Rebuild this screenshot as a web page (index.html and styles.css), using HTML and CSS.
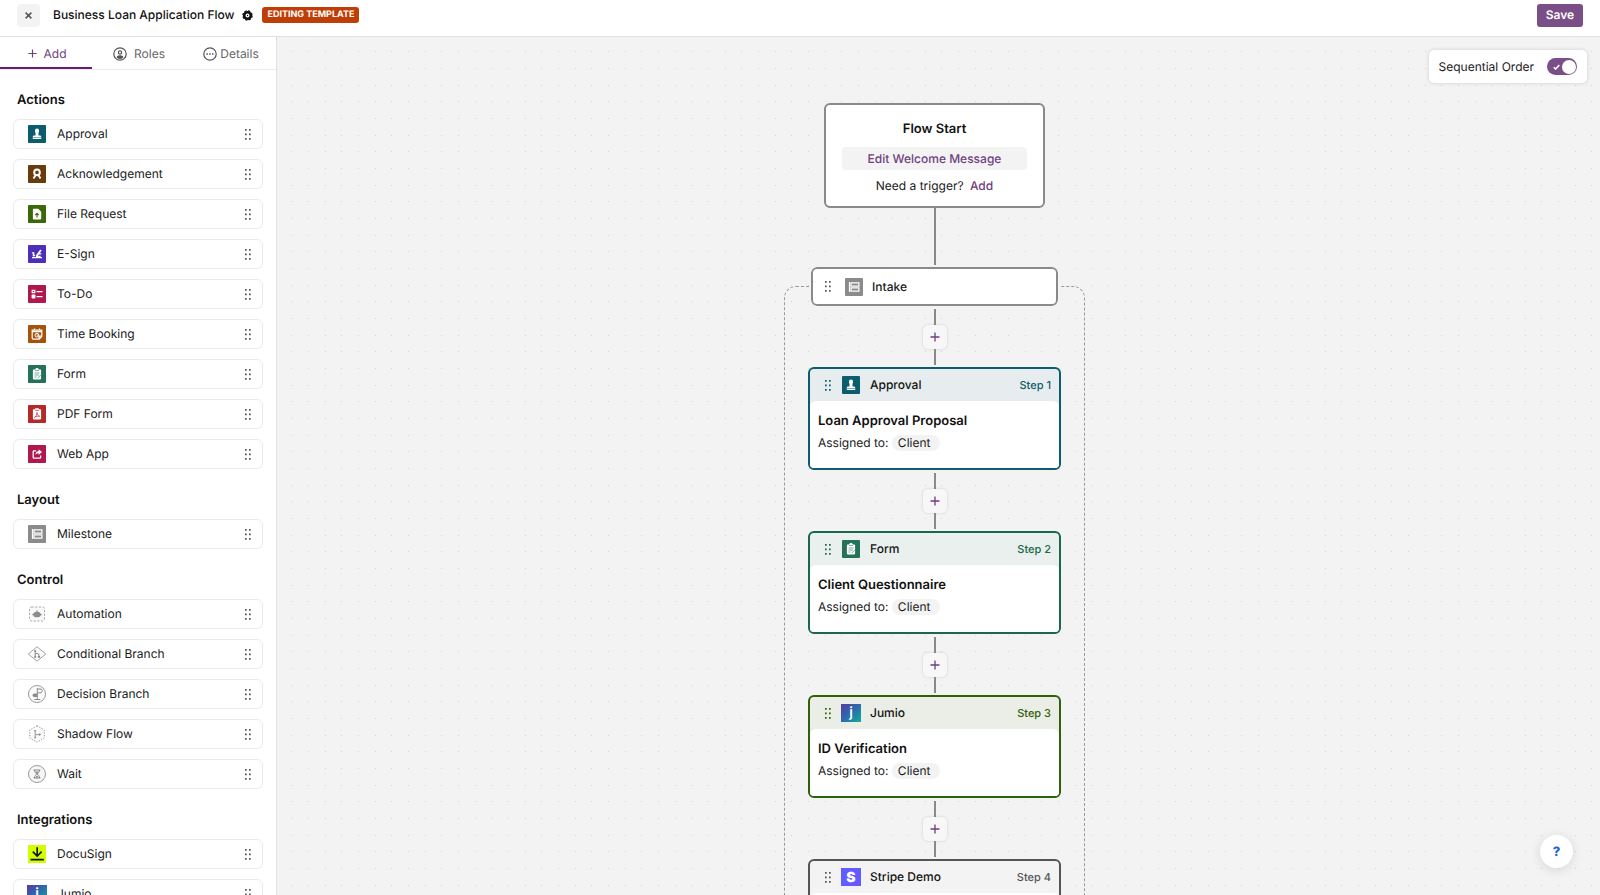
FILE: index.html
```html
<!DOCTYPE html>
<html lang="en">
<head>
  <meta charset="UTF-8" />
  <meta name="viewport" content="width=device-width, initial-scale=1.0"/>
  <title>Business Loan Application Flow</title>
  <link rel="stylesheet" href="styles.css">
</head>
<body>
  <!-- Icon sprite -->
  <svg class="sprite" aria-hidden="true">
    <defs>
      <linearGradient id="jumioGradient" x1="0" y1="0" x2="1" y2="1">
        <stop offset="0" stop-color="#5a3a9c"/>
        <stop offset="0.45" stop-color="#2f66b0"/>
        <stop offset="1" stop-color="#0fae96"/>
      </linearGradient>
    </defs>
    <symbol id="drag" viewBox="0 0 6 11">
      <path fill="currentColor" d="M0 0h1.700v1.700H0zM4 0h1.700v1.700H4zM0 4.500h1.700v1.700H0zM4 4.500h1.700v1.700H4zM0 9h1.700v1.700H0zM4 9h1.700v1.700H4z"/>
    </symbol>
    <symbol id="plus" viewBox="0 0 10 10">
      <path fill="none" stroke="currentColor" stroke-width="1.3" d="M5 .5v9M.5 5h9"/>
    </symbol>
    <symbol id="approval" viewBox="0 0 18 18">
      <rect width="18" height="18" rx="1" fill="#0b5c6c"/>
      <path fill="#fff" d="M9 3.600a2.100 2.100 0 0 1 2.100 2.100c0 .9-.6 1.500-.6 2.600v2.200H12a1.200 1.200 0 0 1 1.200 1.200v2.300H4.800v-2.300A1.200 1.200 0 0 1 6 10.500h1.500V8.300c0-1.100-.6-1.700-.6-2.600A2.100 2.100 0 0 1 9 3.600z"/>
      <path stroke="#0b5c6c" stroke-width=".5" d="M4.800 12.500h8.400"/>
    </symbol>
    <symbol id="acknowledgement" viewBox="0 0 18 18">
      <rect width="18" height="18" rx="1" fill="#693a0c"/>
      <circle cx="9" cy="7.400" r="2.800" fill="none" stroke="#fff" stroke-width="2"/>
      <path fill="none" stroke="#fff" stroke-width="1.900" d="M7.300 10.500 5.500 13.600M10.700 10.500l1.800 3.100"/>
    </symbol>
    <symbol id="file" viewBox="0 0 18 18">
      <rect width="18" height="18" rx="1" fill="#3b6809"/>
      <path fill="#fff" d="M5.800 3.700h4.400l3 3v6.800a.9.9 0 0 1-.9.9H5.800a.9.9 0 0 1-.9-.9V4.600a.9.9 0 0 1 .9-.9z"/>
      <path fill="none" stroke="#3b6809" stroke-width="1.100" d="M9 12.400V8.600M7.200 10.200 9 8.400l1.800 1.800"/>
    </symbol>
    <symbol id="esign" viewBox="0 0 18 18">
      <rect width="18" height="18" rx="1" fill="#4d2fba"/>
      <path fill="none" stroke="#fff" stroke-width="1.300" d="M4 8.200c1.500-1 2.300-.6 1.500 1.200-.8 2 .5 1.500 1.500.6M4 12.700h10"/>
      <path fill="#fff" d="m7.800 11.900.5-2.200 4-5.200 1.400 1.100-2 2.600h1.900l-.6 1.200h-2.200l-.9 1.300h2.700v1.200z"/>
    </symbol>
    <symbol id="todo" viewBox="0 0 18 18">
      <rect width="18" height="18" rx="1" fill="#b0174c"/>
      <path fill="none" stroke="#fff" stroke-width="1.200" d="M4.200 5.300h2.600v2.400H4.200zM8.500 6.600h6M8.500 11.600h6"/>
      <rect x="3.600" y="9.600" width="3.800" height="3.800" rx=".6" fill="#fff"/>
    </symbol>
    <symbol id="booking" viewBox="0 0 18 18">
      <rect width="18" height="18" rx="1" fill="#a5530a"/>
      <path fill="none" stroke="#fff" stroke-width="1.200" d="M4.200 5.200h9.600v6.200l-2.600 2.700h-6a1 1 0 0 1-1-1zM4.200 6.600h9.600M6.500 3.600v2M11.500 3.600v2M13.700 11.200h-2.600v2.700"/>
      <circle cx="8.900" cy="10.200" r="1.900" fill="none" stroke="#fff" stroke-width="1"/>
      <path fill="none" stroke="#fff" stroke-width=".8" d="M8.900 9.200v1.100h1"/>
    </symbol>
    <symbol id="form" viewBox="0 0 18 18">
      <rect width="18" height="18" rx="1" fill="#237259"/>
      <path fill="#fff" d="M5.700 4.500h1.500A1.800 1.800 0 0 1 9 3.100a1.800 1.800 0 0 1 1.800 1.400h1.500a.8.8 0 0 1 .8.8v8.300a.8.8 0 0 1-.8.8H5.700a.8.8 0 0 1-.8-.8V5.300a.8.8 0 0 1 .8-.8z"/>
      <path fill="none" stroke="#237259" stroke-width=".6" d="M7 5.600h4M6.500 8h5M6.500 10h4.500M6.500 12h2M9.500 13.300l3.600-3.600"/>
    </symbol>
    <symbol id="pdf" viewBox="0 0 18 18">
      <rect width="18" height="18" rx="1" fill="#b32a26"/>
      <path fill="#fff" d="M5.700 4.200h1.500V3.300h3.600v.9h1.500a.8.8 0 0 1 .8.8v8.600a.8.8 0 0 1-.8.8H5.700a.8.8 0 0 1-.8-.8V5a.8.8 0 0 1 .8-.8z"/>
      <path fill="none" stroke="#b32a26" stroke-width=".7" d="M7.200 5.400h3.600M8.900 7.400c.5 2.200 1.300 3.600 2.800 3.900-1.800-.4-3.700 0-5.300 1.200 1.700-1.100 2.700-3 2.500-5.100z"/>
    </symbol>
    <symbol id="webapp" viewBox="0 0 18 18">
      <rect width="18" height="18" rx="1" fill="#b0174c"/>
      <path fill="none" stroke="#fff" stroke-width="1.300" d="M8.200 5.800H6a.8.8 0 0 0-.8.8v5.800a.8.8 0 0 0 .8.8h5.800a.8.8 0 0 0 .8-.8v-1.800"/>
      <path fill="#fff" d="m10.600 4.200 3.400 2.900-3.400 2.900V8.300c-1.500 0-2.500.5-3.200 2 0-2.600 1.200-4.100 3.200-4.400z"/>
    </symbol>
    <symbol id="milestone" viewBox="0 0 18 18">
      <rect width="18" height="18" rx="1" fill="#8b8b8b"/>
      <path fill="none" stroke="#fff" stroke-width="1.200" d="M4.500 4v10M6 4.900h7.900v3.300H6zM6 9.900h7.900v3.300H6z"/>
    </symbol>
    <symbol id="automation" viewBox="0 0 18 18">
      <rect x="1.500" y="2" width="15" height="14" rx="2" fill="#f8f8f8" stroke="#a2a2a2" stroke-width=".9" stroke-dasharray="2.200 1.500"/>
      <path fill="#8b8b8b" d="M8.500 5.300h1v1.500c1.800.1 3 1.100 3.200 2.100l1 .2v1l-1.100.3c-.4 1.200-1.700 1.900-3.600 1.900s-3.200-.7-3.600-1.900l-1.100-.3v-1l1-.2c.2-1 1.400-2 3.200-2.100z"/>
    </symbol>
    <symbol id="conditional" viewBox="0 0 18 18">
      <path fill="#fafafa" stroke="#999" stroke-width=".9" d="M9 1.800 17.800 9 9 16.200.2 9z"/>
      <path fill="none" stroke="#888" stroke-width="1" d="M7.200 5.800v6.400M7.200 9c2.500-1.200 3.700-.4 3.700 1v1.500"/>
      <path fill="#888" d="M6.200 5.200h2v1.500h-2zM6.200 11.300h2v1.500h-2zM9.900 11h2.200v1.700H9.900z"/>
    </symbol>
    <symbol id="decision" viewBox="0 0 18 18">
      <circle cx="9" cy="9" r="8.500" fill="#fafafa" stroke="#8f8f8f" stroke-width=".9"/>
      <path fill="none" stroke="#8b8b8b" stroke-width="1" d="M9.300 3v11.300M6.300 14.500h6M9.300 4h3.800l1.300 1.900-1.300 1.900H9.300"/>
      <path fill="#8b8b8b" d="M9.300 8.500v3.400H5.600L4.300 10.200l1.300-1.700z"/>
    </symbol>
    <symbol id="shadow" viewBox="0 0 18 18">
      <path fill="#fafafa" stroke="#8f8f8f" stroke-width="1" stroke-dasharray="1.200 1.500" d="M9 .8l7.300 4.200v8L9 17.200 1.700 13V5z"/>
      <path fill="none" stroke="#999" stroke-width="1" d="M7.200 5.500v7.300M7.200 9.600h4.500"/>
      <path fill="#999" d="M6.300 5h1.800v1.600H6.300zM6.300 11.700h1.800v1.600H6.300zM10.900 7.900l2.500 1.700-2.500 1.700z"/>
    </symbol>
    <symbol id="wait" viewBox="0 0 18 18">
      <circle cx="9" cy="9" r="8.500" fill="#f6f6f6" stroke="#8f8f8f" stroke-width=".9"/>
      <path fill="none" stroke="#888" stroke-width="1" d="M5.600 5h6.800M5.600 13h6.800M6.500 5c0 2.300 1.200 3 2.500 4 1.300-1 2.500-1.700 2.500-4M6.500 13c0-2.300 1.200-3 2.500-4 1.300 1 2.500 1.700 2.500 4"/>
      <path fill="#888" d="M7.200 6.500h3.600L9 8.500zM7 12.500l2-1.800 2 1.800z"/>
    </symbol>
    <symbol id="docusign" viewBox="0 0 18 18">
      <rect width="18" height="18" fill="#d2ff00"/>
      <path fill="none" stroke="#111" stroke-width="1.600" d="M9.200 2.200v8.600M4.800 6.600l4.400 4.400 4.400-4.400M2.500 14.600h13.400"/>
    </symbol>
  </svg>

  <header class="topbar">
    <button class="close-btn" aria-label="Close">
      <svg width="7" height="7" viewBox="0 0 7 7"><path fill="none" stroke="#555" stroke-width="1.500" d="M.6.6l5.800 5.800M6.400.6.6 6.400"/></svg>
    </button>
    <h1>Business Loan Application Flow</h1>
    <button class="gear-btn" aria-label="Settings">
      <svg width="11" height="11" viewBox="0 0 11 11">
        <circle cx="5.500" cy="5.500" r="3.300" fill="none" stroke="#111" stroke-width="2.600"/>
        <circle cx="5.500" cy="5.500" r="4.600" fill="none" stroke="#111" stroke-width="1.300" stroke-dasharray="2.200 1.412"/>
        <circle cx="5.500" cy="5.500" r=".7" fill="#111"/>
      </svg>
    </button>
    <span class="badge">EDITING TEMPLATE</span>
    <button class="save-btn">Save</button>
  </header>

  <div class="workspace">
    <aside class="sidebar">
      <nav class="tabs">
        <button class="tab active"><svg width="9" height="9"><use href="#plus"/></svg>Add</button>
        <button class="tab">
          <svg width="14" height="14" viewBox="0 0 14 14">
            <circle cx="7" cy="7" r="6.200" fill="none" stroke="#555" stroke-width="1.200"/>
            <circle cx="7" cy="5.500" r="1.600" fill="none" stroke="#555" stroke-width="1.200"/>
            <path fill="#555" d="M3.600 10.600c.2-1.600 1.500-2.300 3.400-2.300s3.200.7 3.400 2.300c-.9.900-2 1.400-3.400 1.400s-2.500-.5-3.400-1.400z"/>
          </svg>
          Roles
        </button>
        <button class="tab tab-tight">
          <svg width="14" height="14" viewBox="0 0 14 14">
            <circle cx="7" cy="7" r="6.200" fill="none" stroke="#555" stroke-width="1.200"/>
            <path fill="#555" d="M3.400 6.300h1.500v1.400H3.400zM6.200 6.300h1.500v1.400H6.200zM9 6.300h1.500v1.400H9z"/>
          </svg>
          Details
        </button>
      </nav>

      <div class="palette">
        <section>
          <h2>Actions</h2>
          <ul>
            <li draggable="true"><svg class="icon"><use href="#approval"/></svg>Approval<svg class="drag"><use href="#drag"/></svg></li>
            <li draggable="true"><svg class="icon"><use href="#acknowledgement"/></svg>Acknowledgement<svg class="drag"><use href="#drag"/></svg></li>
            <li draggable="true"><svg class="icon"><use href="#file"/></svg>File Request<svg class="drag"><use href="#drag"/></svg></li>
            <li draggable="true"><svg class="icon"><use href="#esign"/></svg>E-Sign<svg class="drag"><use href="#drag"/></svg></li>
            <li draggable="true"><svg class="icon"><use href="#todo"/></svg>To-Do<svg class="drag"><use href="#drag"/></svg></li>
            <li draggable="true"><svg class="icon"><use href="#booking"/></svg>Time Booking<svg class="drag"><use href="#drag"/></svg></li>
            <li draggable="true"><svg class="icon"><use href="#form"/></svg>Form<svg class="drag"><use href="#drag"/></svg></li>
            <li draggable="true"><svg class="icon"><use href="#pdf"/></svg>PDF Form<svg class="drag"><use href="#drag"/></svg></li>
            <li draggable="true"><svg class="icon"><use href="#webapp"/></svg>Web App<svg class="drag"><use href="#drag"/></svg></li>
          </ul>
        </section>
        <section>
          <h2>Layout</h2>
          <ul>
            <li draggable="true"><svg class="icon"><use href="#milestone"/></svg>Milestone<svg class="drag"><use href="#drag"/></svg></li>
          </ul>
        </section>
        <section>
          <h2>Control</h2>
          <ul>
            <li draggable="true"><svg class="icon"><use href="#automation"/></svg>Automation<svg class="drag"><use href="#drag"/></svg></li>
            <li draggable="true"><svg class="icon"><use href="#conditional"/></svg>Conditional Branch<svg class="drag"><use href="#drag"/></svg></li>
            <li draggable="true"><svg class="icon"><use href="#decision"/></svg>Decision Branch<svg class="drag"><use href="#drag"/></svg></li>
            <li draggable="true"><svg class="icon"><use href="#shadow"/></svg>Shadow Flow<svg class="drag"><use href="#drag"/></svg></li>
            <li draggable="true"><svg class="icon"><use href="#wait"/></svg>Wait<svg class="drag"><use href="#drag"/></svg></li>
          </ul>
        </section>
        <section>
          <h2>Integrations</h2>
          <ul>
            <li draggable="true"><svg class="icon"><use href="#docusign"/></svg>DocuSign<svg class="drag"><use href="#drag"/></svg></li>
            <li draggable="true"><svg class="icon logo" viewBox="0 0 20 18"><rect width="20" height="18" fill="url(#jumioGradient)"/><text x="10" y="13" text-anchor="middle">j</text></svg>Jumio<svg class="drag"><use href="#drag"/></svg></li>
          </ul>
        </section>
      </div>
    </aside>

    <main class="canvas">
      <div class="flow">
        <section class="start-card">
          <h3>Flow Start</h3>
          <button class="welcome-btn">Edit Welcome Message</button>
          <p>Need a trigger? <a href="#">Add</a></p>
        </section>
        <div class="connector first"></div>

        <section class="group">
          <div class="milestone">
            <svg class="drag"><use href="#drag"/></svg>
            <svg class="icon"><use href="#milestone"/></svg>
            Intake
          </div>
          <div class="connector"><button class="add-btn" aria-label="Add step"><svg width="10" height="10"><use href="#plus"/></svg></button></div>

          <article class="step approval">
            <header><svg class="drag"><use href="#drag"/></svg><svg class="icon"><use href="#approval"/></svg>Approval<span class="num">Step 1</span></header>
            <div class="step-body">
              <h3>Loan Approval Proposal</h3>
              <p>Assigned to: <span class="chip">Client</span></p>
            </div>
          </article>
          <div class="connector"><button class="add-btn" aria-label="Add step"><svg width="10" height="10"><use href="#plus"/></svg></button></div>

          <article class="step form">
            <header><svg class="drag"><use href="#drag"/></svg><svg class="icon"><use href="#form"/></svg>Form<span class="num">Step 2</span></header>
            <div class="step-body">
              <h3>Client Questionnaire</h3>
              <p>Assigned to: <span class="chip">Client</span></p>
            </div>
          </article>
          <div class="connector"><button class="add-btn" aria-label="Add step"><svg width="10" height="10"><use href="#plus"/></svg></button></div>

          <article class="step jumio">
            <header><svg class="drag"><use href="#drag"/></svg><svg class="icon logo" viewBox="0 0 20 18"><rect width="20" height="18" fill="url(#jumioGradient)"/><text x="10" y="13" text-anchor="middle">j</text></svg>Jumio<span class="num">Step 3</span></header>
            <div class="step-body">
              <h3>ID Verification</h3>
              <p>Assigned to: <span class="chip">Client</span></p>
            </div>
          </article>
          <div class="connector"><button class="add-btn" aria-label="Add step"><svg width="10" height="10"><use href="#plus"/></svg></button></div>

          <article class="step stripe">
            <header><svg class="drag"><use href="#drag"/></svg><svg class="icon logo" viewBox="0 0 20 18"><rect width="20" height="18" fill="#635bff"/><text x="10" y="14" text-anchor="middle">S</text></svg>Stripe Demo<span class="num">Step 4</span></header>
            <div class="step-body"></div>
          </article>
        </section>
      </div>

      <label class="order-toggle">
        Sequential Order
        <input type="checkbox" checked>
        <span class="switch"><svg width="7" height="6" viewBox="0 0 7 6"><path fill="none" stroke="#fff" stroke-width="1.600" d="M.8 3.200 2.600 5 6.300 1"/></svg></span>
      </label>
      <button class="help-btn" aria-label="Help">?</button>
    </main>
  </div>
</body>
</html>
```

FILE: styles.css
```css
:root {
  --purple: #7a4f88;
  --purple-text: #6f3f80;
  --canvas: #f3f3f3;
  --line: #8a8a8a;
}

* {
  box-sizing: border-box;
}

body {
  margin: 0;
  height: 100vh;
  display: flex;
  flex-direction: column;
  overflow: hidden;
  font-family: Inter, "Liberation Sans", sans-serif;
  font-size: 12px;
  line-height: 16px;
  text-rendering: geometricPrecision;
  color: #1a1a1a;
  background: white;
}

h1, h2, h3, p, ul {
  margin: 0;
  padding: 0;
}

button {
  font: inherit;
  text-rendering: inherit;
  border: none;
  padding: 0;
  cursor: pointer;
}

a {
  color: var(--purple-text);
  font-weight: 500;
  text-decoration: none;
}

.sprite {
  position: absolute;
  width: 0;
  height: 0;
}

.icon {
  width: 20px;
  height: 18px;
  flex: none;
}

.drag {
  width: 6px;
  height: 11px;
  flex: none;
  color: #555;
}

.logo text {
  fill: white;
  font-size: 14px;
  font-weight: 600;
}

.stripe .logo text {
  font-weight: 900;
}

/* Top bar */
.topbar {
  display: flex;
  align-items: center;
  height: 37px;
  padding: 0 17px 6px;
  border-bottom: 1px solid #e0e0e0;
}

.close-btn {
  display: flex;
  align-items: center;
  justify-content: center;
  width: 23px;
  height: 23px;
  border-radius: 4px;
  background: var(--canvas);
}

h1 {
  margin-left: 13px;
  font-size: 12px;
  font-weight: 500;
  color: #111;
}

.gear-btn {
  display: flex;
  margin: 0 9px 0 8px;
  background: none;
}

.badge {
  padding: 0 5px;
  border-radius: 3px;
  background: #bf3d06;
  color: white;
  font-size: 9px;
  font-weight: 700;
}

.save-btn {
  width: 46px;
  height: 23px;
  margin-left: auto;
  border-radius: 3px;
  background: var(--purple);
  color: white;
  font-weight: 600;
}

.workspace {
  display: flex;
  flex: 1;
  min-height: 0;
}

/* Sidebar */
.sidebar {
  display: flex;
  flex-direction: column;
  flex: none;
  width: 277px;
  border-right: 1px solid #e0e0e0;
}

.tabs {
  display: flex;
  flex: none;
  height: 33px;
  border-bottom: 1px solid #ececec;
}

.tab {
  display: flex;
  flex: 1;
  align-items: center;
  justify-content: center;
  gap: 7px;
  padding: 3px 0 0 2px;
  border-bottom: 2px solid transparent;
  background: none;
  color: #666;
}

.tab-tight {
  gap: 3px;
}

.tab.active {
  border-color: #6a1b7a;
  color: var(--purple-text);
}

.palette {
  display: flex;
  flex-direction: column;
  gap: 21px;
  padding: 20px 13px;
  overflow-y: auto;
  scrollbar-width: none;
}

h2 {
  margin: 0 4px 9px;
  font-size: 13px;
  line-height: 20px;
  font-weight: 600;
  color: #111;
}

.palette ul {
  display: flex;
  flex-direction: column;
  gap: 10px;
  list-style: none;
}

.palette li {
  display: flex;
  align-items: center;
  height: 30px;
  padding: 0 11px 0 13px;
  border: 1px solid #ebebeb;
  border-radius: 6px;
  cursor: grab;
}

.palette .icon {
  margin-right: 10px;
}

.palette .drag {
  margin-left: auto;
}

/* Canvas */
.canvas {
  position: relative;
  flex: 1;
  overflow: hidden;
  background-color: var(--canvas);
  background-image: url("data:image/svg+xml,%3Csvg xmlns='http://www.w3.org/2000/svg' width='50' height='50'%3E%3Cpath fill='%23d4d4d4' d='M14 14h1v1h-1zM31 14h1v1h-1zM48 14h1v1h-1zM14 31h1v1h-1zM31 31h1v1h-1zM48 31h1v1h-1zM14 48h1v1h-1zM31 48h1v1h-1zM48 48h1v1h-1z'/%3E%3C/svg%3E");
}

.flow {
  display: flex;
  flex-direction: column;
  align-items: center;
  padding: 66px 8px 0 0;
}

.start-card {
  display: flex;
  flex-direction: column;
  align-items: center;
  width: 221px;
  height: 105px;
  padding: 16px 16px 0;
  border: 2px solid var(--line);
  border-radius: 6px;
  background: white;
}

h3 {
  font-size: 13px;
  font-weight: 600;
  color: #111;
}

.welcome-btn {
  width: 100%;
  height: 23px;
  margin: 10px 0 8px;
  border-radius: 4px;
  background: var(--canvas);
  color: var(--purple-text);
  font-weight: 500;
}

.start-card a {
  margin-left: 3px;
}

.connector {
  display: flex;
  flex-direction: column;
  align-items: center;
  height: 61px;
  padding: 3px 0 2px;
}

.connector::before,
.connector::after {
  content: "";
  flex: 1;
  width: 2px;
  background: var(--line);
}

.connector.first {
  height: 59px;
  padding-top: 0;
}

.add-btn {
  display: flex;
  align-items: center;
  justify-content: center;
  width: 24px;
  height: 24px;
  border-radius: 5px;
  background: #f7f7f7;
  color: var(--purple-text);
  box-shadow: 0 0 3px rgba(0, 0, 0, 0.15);
}

.group {
  position: relative;
  display: flex;
  flex-direction: column;
  align-items: center;
  width: 301px;
}

/* dashed outline that starts behind the milestone */
.group::before {
  content: "";
  position: absolute;
  inset: 19px 0 0;
  border: 1px dashed #999;
  border-radius: 12px;
}

.group .connector {
  position: relative;
}

.milestone {
  position: relative;
  display: flex;
  align-items: center;
  width: 247px;
  height: 39px;
  padding-left: 12px;
  border: 2px solid var(--line);
  border-radius: 6px;
  outline: 2px solid var(--canvas);
  background: white;
  font-weight: 500;
}

.milestone .icon {
  margin: 0 8px 0 13px;
}

.step {
  --tone: #0b5c6c;
  --tint: #e7edef;
  position: relative;
  width: 253px;
  height: 103px;
  border: 2px solid var(--tone);
  border-radius: 6px;
  background: var(--tint);
}

.step.form {
  --tone: #196848;
  --tint: #e9f0ee;
}

.step.jumio {
  --tone: #2f6108;
  --tint: #ebeee6;
}

.step.stripe {
  --tone: #555;
  --tint: #f3f3f3;
}

.step header {
  display: flex;
  align-items: center;
  height: 32px;
  padding: 0 8px 0 15px;
  font-weight: 500;
  color: #111;
}

.step .drag {
  color: var(--tone);
}

.step .icon {
  margin: 0 9px 0 10px;
}

.num {
  margin-left: auto;
  font-size: 11px;
  color: var(--tone);
}

.step-body {
  height: 67px;
  padding: 12px 8px;
  border-radius: 6px 6px 4px 4px;
  background: white;
}

.step-body p {
  margin-top: 6px;
}

.chip {
  display: inline-block;
  padding: 0 10px 0 6px;
  border-radius: 8px;
  background: var(--canvas);
}

/* Floating controls */
.order-toggle {
  position: absolute;
  top: 13px;
  right: 13px;
  display: flex;
  align-items: center;
  gap: 13px;
  height: 33px;
  padding: 0 10px;
  border-radius: 5px;
  background: white;
  box-shadow: 0 0 4px rgba(0, 0, 0, 0.15);
  cursor: pointer;
}

.order-toggle input {
  position: absolute;
  opacity: 0;
}

.switch {
  display: flex;
  align-items: center;
  justify-content: space-between;
  width: 30px;
  height: 17px;
  padding: 0 1px 0 6px;
  border-radius: 9px;
  background: #aaa;
}

.switch::after {
  content: "";
  width: 14px;
  height: 14px;
  border-radius: 50%;
  background: white;
}

input:checked + .switch {
  background: var(--purple);
}

.help-btn {
  position: absolute;
  right: 27px;
  bottom: 27px;
  width: 33px;
  height: 33px;
  border-radius: 50%;
  background: white;
  color: #1f62d6;
  font-size: 13px;
  font-weight: 800;
  box-shadow: 0 2px 12px rgba(0, 0, 0, 0.12);
}
```
